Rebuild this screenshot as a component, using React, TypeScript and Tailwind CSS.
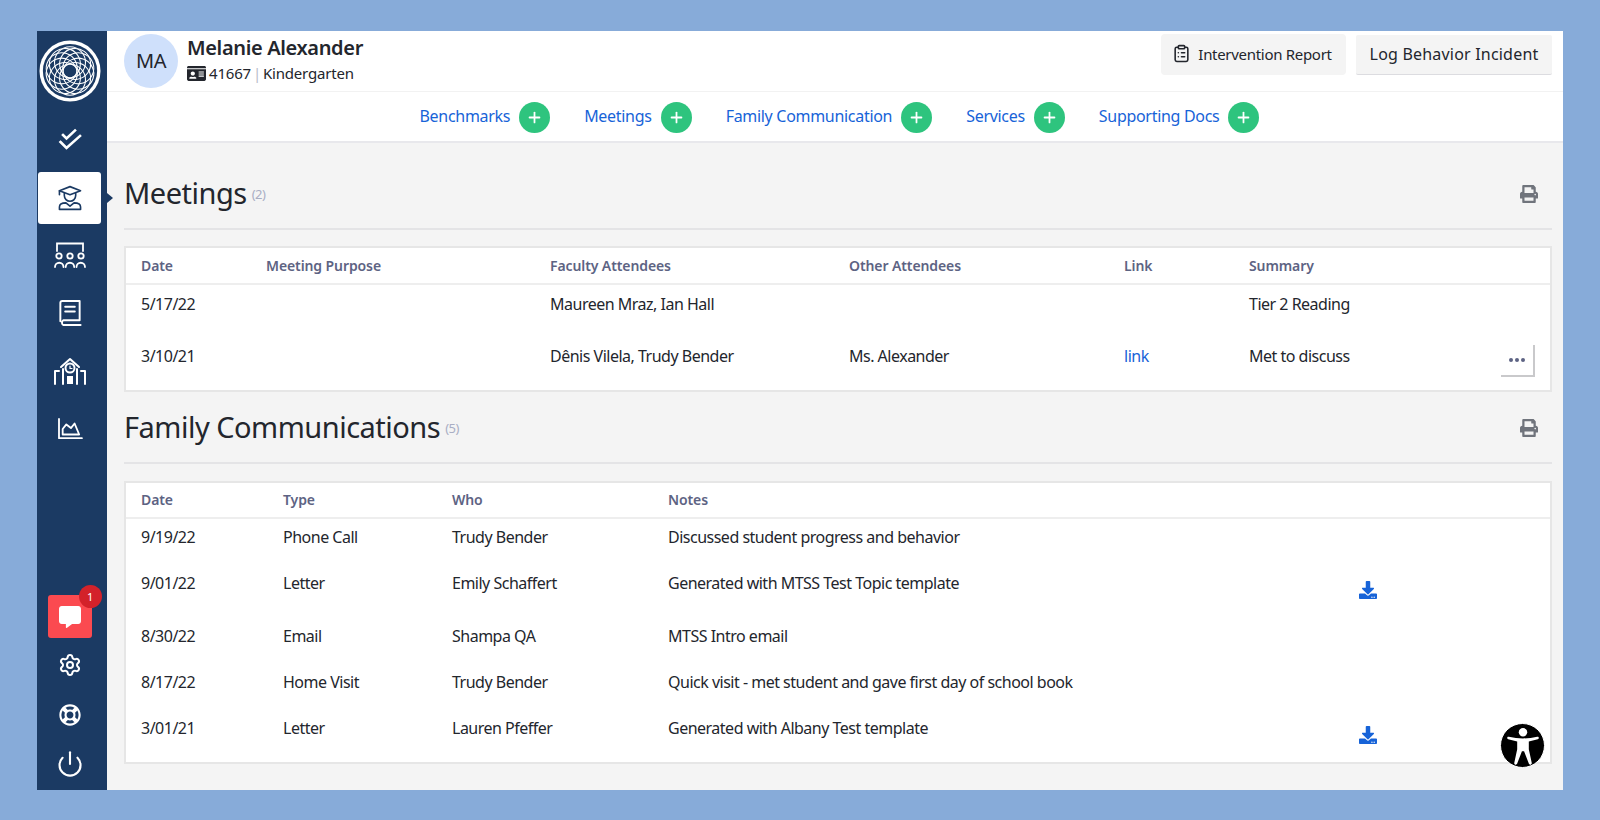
import React from 'react';
import { Power, Settings, Plus, ClipboardList } from 'lucide-react';
import { FaCommentAlt, FaDownload, FaIdCard, FaPrint, FaRegLifeRing } from 'react-icons/fa';

const LogoMark = () => (
  <svg viewBox="0 0 64 64" className="w-[62px] h-[62px]">
    <circle cx="32" cy="32" r="31.500" fill="#fff" />
    <circle cx="32" cy="32" r="28" fill="#1b3a63" />
    <g fill="none" stroke="#fff" strokeWidth="1.100">
      {[0, 36, 72, 108, 144, 180, 216, 252, 288, 324].map((a) => (
        <circle key={a} cx="32" cy="23" r="16" transform={`rotate(${a} 32 32)`} />
      ))}
    </g>
  </svg>
);

const CheckIcon = () => (
  <svg viewBox="0 0 24 24" className="w-[24px] h-[24px]" fill="none" stroke="#fff" strokeWidth="2.600" strokeLinecap="square">
    <path d="M2.500 14l6 6L22 8" />
    <path d="M5 7l3.500 3.500L17 2.500" />
  </svg>
);

const StudentIcon = () => (
  <svg viewBox="0 0 32 32" className="w-[26px] h-[28px]" fill="none" stroke="#1b3a63" strokeWidth="2" strokeLinejoin="round" strokeLinecap="round">
    <path d="M16 2 29 7l-13 5L3 7z" />
    <path d="M9 10v3a7 7 0 0 0 14 0v-3" />
    <path d="M3 7v5" />
    <path d="M11 22c-5 0-8 2-8 5v3h26v-3c0-3-3-5-8-5l-5 4z" />
  </svg>
);

const ClassIcon = () => (
  <svg viewBox="0 0 32 26" className="w-[32px] h-[26px]" fill="none" stroke="#fff" strokeWidth="1.800" strokeLinecap="round">
    <path d="M3 9V1.500h26V9" />
    <circle cx="5" cy="14" r="2.700" />
    <circle cx="16" cy="14" r="2.700" />
    <circle cx="27" cy="14" r="2.700" />
    <path d="M1 25a4.200 4.200 0 0 1 8.500 0M11.700 25a4.200 4.200 0 0 1 8.500 0M22.500 25a4.200 4.200 0 0 1 8.500 0" />
  </svg>
);

const BookIcon = () => (
  <svg viewBox="0 0 24 28" className="w-[24px] h-[27px]" fill="none" stroke="#fff" strokeWidth="2" strokeLinecap="round" strokeLinejoin="round">
    <path d="M2 23V4a2 2 0 0 1 2-2h18v20H5a3 3 0 0 0 0 5h18" />
    <path d="M7 8h10M7 13h10" />
  </svg>
);

const SchoolIcon = () => (
  <svg viewBox="0 0 34 28" className="w-[34px] h-[28px]" fill="none" stroke="#fff" strokeWidth="2" strokeLinecap="round" strokeLinejoin="round">
    <path d="M8 10 17 2l9 8" />
    <circle cx="17" cy="11" r="4.500" />
    <path d="M17 9v2.500h2" strokeWidth="1.200" />
    <path d="M10 27V12M24 27V12M2 27V14h4M32 27V14h-4" />
    <rect x="14" y="19" width="6" height="8" fill="#fff" stroke="none" />
  </svg>
);

const ChartIcon = () => (
  <svg viewBox="0 0 28 24" className="w-[26px] h-[22px]" fill="none" stroke="#fff" strokeWidth="2" strokeLinejoin="round" strokeLinecap="round">
    <path d="M2 1v21h25" />
    <path d="M6 18V12l4-5 5 4 4-5 5 12z" />
  </svg>
);

const AccessibilityBadge = () => (
  <div className="absolute left-[1500px] top-[723px] w-[45px] h-[45px] rounded-full bg-black border border-white flex items-center justify-center">
    <svg viewBox="0 0 32 36" className="w-[34px] h-[38px]" fill="#fff">
      <circle cx="16" cy="5" r="4" />
      <path d="M2 11.500c-1.600-.4-1.100-2.500.5-2.200 9 2 18 2 27 0 1.600-.3 2.100 1.800.5 2.200l-8.500 2.200V21l2.800 13c.3 1.800-2.300 2.400-2.800.6L17 23h-2l-4.500 11.600c-.5 1.800-3.100 1.200-2.800-.6L10.500 21v-7.300z" />
    </svg>
  </div>
);

const NavAction = ({ label }: { label: string }) => (
  <div className="flex items-center gap-[9px]">
    <a className="text-[16px] tracking-[-0.3px] text-[#1763d8] -mt-[1px]">{label}</a>
    <span className="w-[31px] h-[31px] rounded-full bg-[#2ec47e] flex items-center justify-center mt-[1px]">
      <Plus className="w-[17px] h-[17px] text-white" strokeWidth={2.5} />
    </span>
  </div>
);

const SectionTitle = ({ title, count }: { title: string; count: number }) => (
  <div className="h-[72px] border-b-2 border-[#e4e4e6] flex items-center justify-between">
    <div className="flex items-start">
      <h2 className="text-[29px] leading-[40px] text-[#23262d]">{title}</h2>
      <span className="text-[13px] text-[#a9aec4] ml-[5px] mt-[9px]">({count})</span>
    </div>
    <FaPrint className="w-[18px] h-[18px] text-[#70747c] mr-[14px] mt-[2px]" />
  </div>
);

const meetingCols = 'grid grid-cols-[125px_284px_299px_275px_125px_1fr] pl-[15px]';
const familyCols = 'grid grid-cols-[142px_169px_216px_691px_1fr] pl-[15px]';
const headCell = 'text-[14px] font-semibold tracking-[-0.1px] text-[#5d6383]';

const families = [
  { date: '9/19/22', type: 'Phone Call', who: 'Trudy Bender', notes: 'Discussed student progress and behavior', h: 'h-[46px]' },
  { date: '9/01/22', type: 'Letter', who: 'Emily Schaffert', notes: 'Generated with MTSS Test Topic template', h: 'h-[53px]', file: true },
  { date: '8/30/22', type: 'Email', who: 'Shampa QA', notes: 'MTSS Intro email', h: 'h-[46px]' },
  { date: '8/17/22', type: 'Home Visit', who: 'Trudy Bender', notes: 'Quick visit - met student and gave first day of school book', h: 'h-[46px]' },
  { date: '3/01/21', type: 'Letter', who: 'Lauren Pfeffer', notes: 'Generated with Albany Test template', h: 'h-[52px]', file: true },
];

export default function App() {
  return (
    <div className="relative w-[1600px] h-[820px] bg-[#87abd9] pt-[31px] pb-[30px] px-[37px] font-['Noto_Sans',sans-serif] text-[16px] leading-[24px] tracking-[-0.5px] text-[#23262d]">
      <div className="flex h-full overflow-hidden">
        <aside className="w-[70px] shrink-0 bg-[#1b3a63] flex flex-col items-center pt-[9px] pb-[12px] pr-[5px]">
          <LogoMark />
          <div className="mt-[26px]"><CheckIcon /></div>
          <div className="relative w-[63px] h-[52px] rounded-[3px] bg-white flex items-center justify-center mt-[20px]">
            <StudentIcon />
            <span className="absolute left-[69px] top-[21px] w-0 h-0 border-y-[5px] border-y-transparent border-l-[6px] border-l-[#1b3a63]" />
          </div>
          <div className="mt-[18px]"><ClassIcon /></div>
          <div className="mt-[31px]"><BookIcon /></div>
          <div className="mt-[31px]"><SchoolIcon /></div>
          <div className="mt-[33px]"><ChartIcon /></div>
          <div className="relative mt-auto w-[44px] h-[43px] rounded-[3px] bg-[#fb4a50] flex items-center justify-center">
            <FaCommentAlt className="w-[22px] h-[22px] text-white" />
            <span className="absolute -right-[10px] -top-[10px] w-[23px] h-[23px] rounded-full bg-[#d3222a] text-white text-[11px] flex items-center justify-center">1</span>
          </div>
          <Settings className="w-[24px] h-[24px] text-white mt-[15px]" strokeWidth={2} />
          <FaRegLifeRing className="w-[22px] h-[22px] text-white mt-[27px]" />
          <Power className="w-[28px] h-[28px] text-white mt-[24px]" strokeWidth={1.8} />
        </aside>

        <main className="flex-1 min-w-0 bg-[#f4f4f4]">
          <header className="bg-white h-[61px] border-b border-[#f2f2f2] flex items-start justify-between pl-[17px] pr-[11px] pt-[3px]">
            <div className="flex items-center gap-[9px]">
              <div className="w-[54px] h-[54px] rounded-full bg-[#cfe0fb] flex items-center justify-center text-[20px]">MA</div>
              <div className="-mt-[2px]">
                <div className="text-[20px] leading-[26px] font-semibold tracking-[-0.35px]">Melanie Alexander</div>
                <div className="flex items-center text-[15px] leading-[24px] tracking-[-0.2px]">
                  <FaIdCard className="w-[19px] h-[17px] mr-[3px]" />
                  41667
                  <span className="text-[#b8bcc9] mx-[2px]">|</span>
                  Kindergarten
                </div>
              </div>
            </div>
            <div className="flex items-center gap-[10px]">
              <button className="h-[41px] w-[185px] rounded-[4px] bg-[#f4f4f4] flex items-center justify-center gap-[7px] pb-[2px] pr-[3px] text-[15px] tracking-[-0.3px]">
                <ClipboardList className="w-[19px] h-[19px]" strokeWidth={2} />
                Intervention Report
              </button>
              <button className="h-[40px] w-[196px] rounded-[2px] bg-[#f4f4f4] border-b border-[#dcdce0] text-[16px] tracking-[0.2px]">Log Behavior Incident</button>
            </div>
          </header>

          <nav className="bg-white h-[51px] border-b-2 border-[#e8e8ec] flex items-center justify-center gap-[34px] pl-[9px]">
            <NavAction label="Benchmarks" />
            <NavAction label="Meetings" />
            <NavAction label="Family Communication" />
            <NavAction label="Services" />
            <NavAction label="Supporting Docs" />
          </nav>

          <div className="relative pr-[11px] pl-[17px] pt-[15px]">
            <SectionTitle title="Meetings" count={2} />
            <section className="relative mt-[16px] bg-white border-2 border-[#e6e6e6]">
              <div className={`${meetingCols} h-[37px] items-center border-b-2 border-[#eeeeee] ${headCell}`}>
                <div>Date</div><div>Meeting Purpose</div><div>Faculty Attendees</div><div>Other Attendees</div><div>Link</div><div>Summary</div>
              </div>
              <div className={`${meetingCols} h-[52px] pt-[7px]`}>
                <div>5/17/22</div><div /><div>Maureen Mraz, Ian Hall</div><div /><div /><div>Tier 2 Reading</div>
              </div>
              <div className={`${meetingCols} h-[53px] pt-[7px]`}>
                <div>3/10/21</div><div /><div>Dênis Vilela, Trudy Bender</div><div>Ms. Alexander</div><div className="text-[#1763d8]">link</div><div>Met to discuss</div>
              </div>
              <button className="absolute right-[15px] bottom-[13px] w-[34px] h-[32px] border-r-2 border-b-2 border-[#c9c9cb] flex items-center justify-center gap-[2px]">
                <span className="w-[4px] h-[4px] rounded-full bg-[#5d6383]" />
                <span className="w-[4px] h-[4px] rounded-full bg-[#5d6383]" />
                <span className="w-[4px] h-[4px] rounded-full bg-[#5d6383]" />
              </button>
            </section>

            <SectionTitle title="Family Communications" count={5} />
            <section className="mt-[17px] bg-white border-2 border-[#e6e6e6]">
              <div className={`${familyCols} h-[36px] items-center border-b-2 border-[#eeeeee] ${headCell}`}>
                <div>Date</div><div>Type</div><div>Who</div><div>Notes</div><div />
              </div>
              {families.map((row) => (
                <div key={row.date} className={`${familyCols} ${row.h} pt-[6px]`}>
                  <div>{row.date}</div>
                  <div>{row.type}</div>
                  <div>{row.who}</div>
                  <div>{row.notes}</div>
                  <div>{row.file && <FaDownload className="w-[18px] h-[18px] text-[#1763d8] mt-[10px]" />}</div>
                </div>
              ))}
            </section>

            <h2 className="text-[29px] leading-[40px] mt-[18px]">Services</h2>
          </div>
        </main>
      </div>
      <AccessibilityBadge />
    </div>
  );
}
